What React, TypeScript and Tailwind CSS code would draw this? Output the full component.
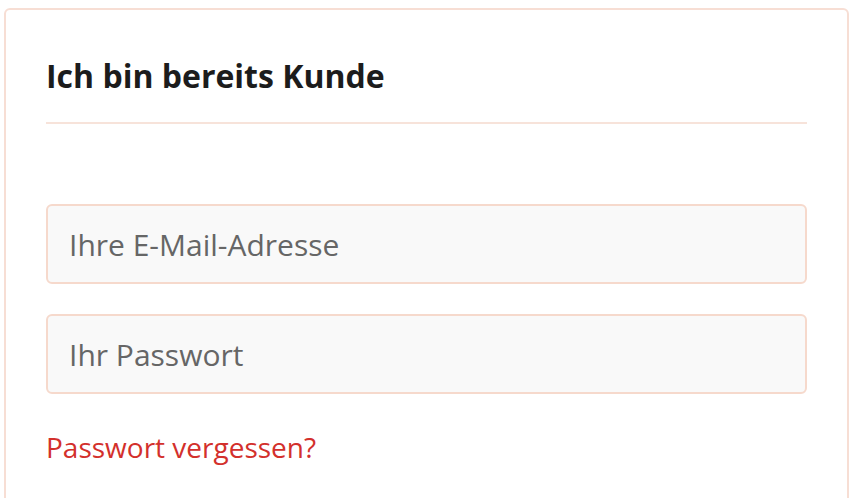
export default function App() {
  return (
    <div className="w-[862px] h-[498px] overflow-hidden bg-white" style={{ fontFamily: '"Open Sans", sans-serif' }}>
      <div className="ml-[4px] mt-[8px] w-[845px] h-[520px] border-2 border-[#f7ded4] rounded-[6px] px-[40px] pt-[47px]">
        <h2 className="text-[32px] leading-[38px] font-bold text-[#1c1c1c]">Ich bin bereits Kunde</h2>
        <div className="mt-[27px] h-[2px] bg-[#f7e3da]" />
        <div className="mt-[80px] flex flex-col gap-[30px]">
          <input
            className="h-[80px] w-full rounded-[6px] border-2 border-[#f6d9cc] bg-[#f9f9f9] px-[21px] text-[30px] text-[#555] placeholder:text-[#666] outline-none"
            placeholder="Ihre E-Mail-Adresse"
          />
          <input
            type="password"
            className="h-[80px] w-full rounded-[6px] border-2 border-[#f6d9cc] bg-[#f9f9f9] px-[21px] text-[30px] text-[#555] placeholder:text-[#666] outline-none"
            placeholder="Ihr Passwort"
          />
        </div>
        <a className="mt-[35px] block text-[28px] leading-[36px] text-[#d3302c]">Passwort vergessen?</a>
      </div>
    </div>
  );
}
